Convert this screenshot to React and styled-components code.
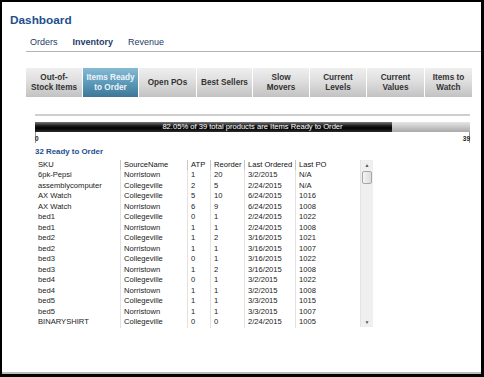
import React from "react";
import styled, { createGlobalStyle } from "styled-components";

const Global = createGlobalStyle`
  html, body { margin: 0; padding: 0; background: #000; }
  body { font-family: "Liberation Sans", Arial, sans-serif; }
  * { box-sizing: border-box; }
`;

const Frame = styled.div`
  margin: 2px 3px 3px 2px;
  width: 479px;
  height: 372px;
  background: #fff;
  border-bottom: 2px solid #bdbdbd;
  overflow: hidden;
  display: flex;
  flex-direction: column;
`;

const Title = styled.h1`
  margin: 11px 0 0 8px;
  font-size: 11.8px;
  line-height: 14px;
  font-weight: bold;
  color: #1d4f8e;
`;

const Nav = styled.nav`
  margin: 10px 0 0 24px;
  display: flex;
  gap: 15px;
  padding: 0 0 3px 4px;
  border-bottom: 1px solid #b4b4b4;
`;

const NavItem = styled.span`
  font-size: 9px;
  line-height: 11px;
  color: #1f3c6a;
  font-weight: ${(p) => (p.$active ? "bold" : "normal")};
`;

const Tabs = styled.div`
  margin: 16px 0 0 24px;
  display: flex;
  height: 29px;
`;

const Tab = styled.div`
  width: ${(p) => p.$w}px;
  flex: none;
  display: flex;
  align-items: center;
  justify-content: center;
  text-align: center;
  font-size: 8.2px;
  line-height: 10px;
  font-weight: bold;
  border-right: 1px solid #fff;
  color: ${(p) => (p.$active ? "#eef5fa" : "#333")};
  background: ${(p) =>
    p.$active
      ? "linear-gradient(#86bad4, #5d9aba 50%, #3d7797)"
      : "linear-gradient(#efefef, #dcdcdc 50%, #c2c2c2)"};
`;

const Rule = styled.div`
  margin: 17px 0 0 33px;
  width: 435px;
  height: 2px;
  background: #cfcfcf;
`;

const Bar = styled.div`
  position: relative;
  margin: 6px 0 0 33px;
  width: 435px;
  height: 10px;
  display: flex;
  background: linear-gradient(#e4e4e4, #c8c8c8 50%, #a9a9a9);
`;

const BarFill = styled.div`
  height: 100%;
  background: linear-gradient(#777, #222 35%, #000 60%, #2a2a2a);
`;

const BarText = styled.span`
  position: absolute;
  inset: 0;
  text-align: center;
  font-size: 7.6px;
  line-height: 10px;
  color: #fff;
`;

const Scale = styled.div`
  margin: 0 0 0 33px;
  width: 435px;
  display: flex;
  justify-content: space-between;
  border-left: 1px solid #999;
  border-right: 1px solid #999;
  padding-top: 3px;
  height: 11px;
`;

const ScaleLabel = styled.span`
  font-size: 6.5px;
  line-height: 8px;
  font-weight: bold;
  color: #222;
  margin: 0 -1px;
`;

const Heading = styled.div`
  margin: 4px 0 0 33px;
  font-size: 7.9px;
  line-height: 10px;
  font-weight: bold;
  color: #1d4f8e;
`;

const TableWrap = styled.div`
  margin: 3px 0 0 33px;
  display: flex;
  width: 338px;
  height: 167px;
`;

const Grid = styled.div`
  display: grid;
  grid-template-columns: 85px 67px 23px 34px 51px 65px;
  grid-auto-rows: 10.48px;
  align-content: start;
`;

const Cell = styled.div`
  font-size: 7.6px;
  line-height: 10.48px;
  color: ${(p) => (p.$head ? "#111" : "#222")};
  padding-left: 3px;
  white-space: nowrap;
  overflow: hidden;
  border-left: ${(p) => (p.$first ? "none" : `1px solid ${p.$head ? "#c8c8c8" : "#e2e2e2"}`)};
`;

const Scrollbar = styled.div`
  width: 13px;
  height: 100%;
  background: #efefef;
  border-left: 1px solid #e4e4e4;
  display: flex;
  flex-direction: column;
  align-items: center;
`;

const Arrow = styled.div`
  height: 10px;
  display: flex;
  align-items: center;
  justify-content: center;
  font-size: 5px;
  color: #555;
`;

const Thumb = styled.div`
  margin-top: 1px;
  width: 10px;
  height: 13px;
  border: 1px solid #a8a8a8;
  border-radius: 2px;
  background: linear-gradient(90deg, #f4f4f4, #dcdcdc);
`;

const Spacer = styled.div`
  flex: 1;
`;

const tabs = [
  ["Out-of-", "Stock Items", 57],
  ["Items Ready", "to Order", 56, true],
  ["Open POs", null, 58],
  ["Best Sellers", null, 56],
  ["Slow", "Movers", 57],
  ["Current", "Levels", 57],
  ["Current", "Values", 58],
  ["Items to", "Watch", 48],
];

const head = ["SKU", "SourceName", "ATP", "Reorder", "Last Ordered", "Last PO"];
const rows = [
  ["6pk-Pepsi", "Norristown", "1", "20", "3/2/2015", "N/A"],
  ["assemblycomputer", "Collegeville", "2", "5", "2/24/2015", "N/A"],
  ["AX Watch", "Collegeville", "5", "10", "6/24/2015", "1016"],
  ["AX Watch", "Norristown", "6", "9", "6/24/2015", "1008"],
  ["bed1", "Collegeville", "0", "1", "2/24/2015", "1022"],
  ["bed1", "Norristown", "1", "1", "2/24/2015", "1008"],
  ["bed2", "Collegeville", "1", "2", "3/16/2015", "1021"],
  ["bed2", "Norristown", "1", "1", "3/16/2015", "1007"],
  ["bed3", "Collegeville", "0", "1", "3/16/2015", "1022"],
  ["bed3", "Norristown", "1", "2", "3/16/2015", "1008"],
  ["bed4", "Collegeville", "0", "1", "3/2/2015", "1022"],
  ["bed4", "Norristown", "1", "1", "3/2/2015", "1008"],
  ["bed5", "Collegeville", "1", "1", "3/3/2015", "1015"],
  ["bed5", "Norristown", "1", "1", "3/3/2015", "1007"],
  ["BINARYSHIRT", "Collegeville", "0", "0", "2/24/2015", "1005"],
];

export default function App() {
  const pct = (32 / 39) * 100;
  return (
    <>
      <Global />
      <Frame>
        <Title>Dashboard</Title>
        <Nav>
          <NavItem>Orders</NavItem>
          <NavItem $active>Inventory</NavItem>
          <NavItem>Revenue</NavItem>
        </Nav>
        <Tabs>
          {tabs.map(([a, b, w, active]) => (
            <Tab key={a + b} $w={w} $active={active}>
              <span>
                {a}
                {b && <br />}
                {b}
              </span>
            </Tab>
          ))}
        </Tabs>
        <Rule />
        <Bar>
          <BarFill style={{ width: `${pct}%` }} />
          <BarText>82.05% of 39 total products are Items Ready to Order</BarText>
        </Bar>
        <Scale>
          <ScaleLabel>0</ScaleLabel>
          <ScaleLabel>39</ScaleLabel>
        </Scale>
        <Heading>32 Ready to Order</Heading>
        <TableWrap>
          <Grid>
            {head.map((h, i) => (
              <Cell key={h} $head $first={i === 0}>
                {h}
              </Cell>
            ))}
            {rows.map((r, ri) =>
              r.map((c, ci) => (
                <Cell key={ri + "-" + ci} $first={ci === 0}>
                  {c}
                </Cell>
              ))
            )}
          </Grid>
          <Scrollbar>
            <Arrow>▲</Arrow>
            <Thumb />
            <Spacer />
            <Arrow>▼</Arrow>
          </Scrollbar>
        </TableWrap>
      </Frame>
    </>
  );
}
